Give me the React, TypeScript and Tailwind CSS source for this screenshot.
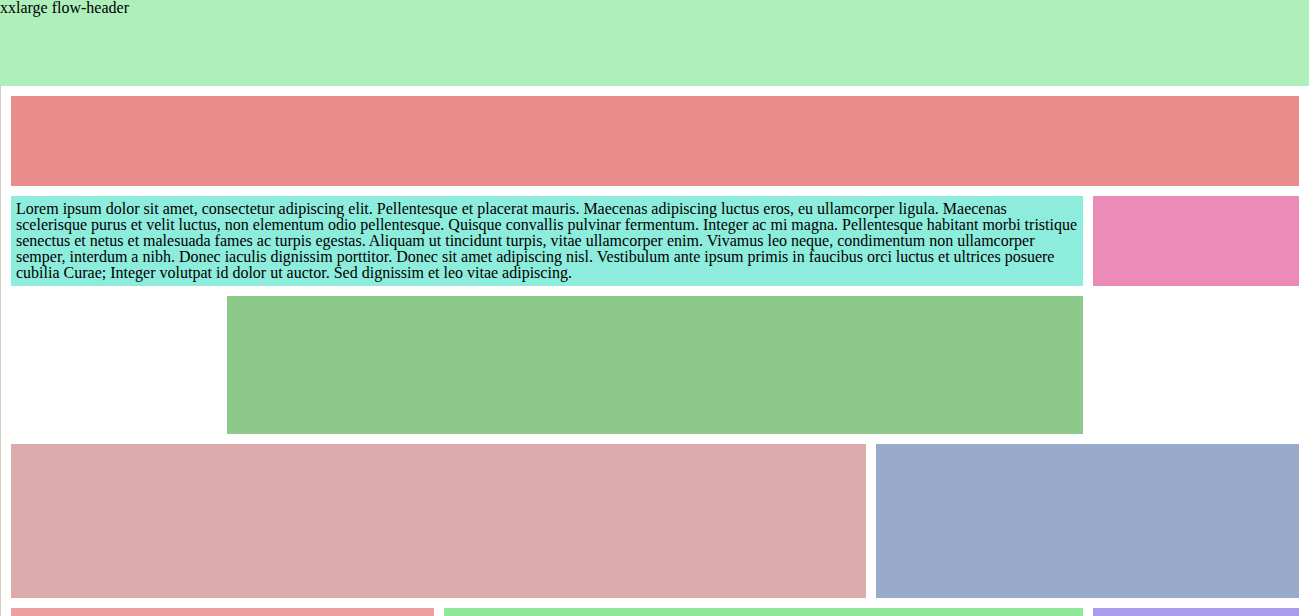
import React from "react";

export default function App() {
  return (
    <div className="w-[1309px] h-[616px] overflow-hidden bg-white font-['Liberation_Serif','Times_New_Roman',serif] text-[16px] text-black">
      <div className="h-[86px] bg-[#aeefbb] leading-[16px]">xxlarge flow-header</div>
      <div className="border-l border-[#d4d0c8] pl-[10px] pr-[10px] pt-[10px] grid grid-cols-6 gap-[10px]">
        <div className="col-span-6 h-[90px] bg-[#e88c8c]" />
        <div className="col-span-5 h-[90px] bg-[#8eecdc] px-[5px] pt-[5px] leading-[16px]">
          Lorem ipsum dolor sit amet, consectetur adipiscing elit. Pellentesque et placerat mauris. Maecenas adipiscing luctus eros, eu ullamcorper ligula. Maecenas scelerisque purus et velit luctus, non elementum odio pellentesque. Quisque convallis pulvinar fermentum. Integer ac mi magna. Pellentesque habitant morbi tristique senectus et netus et malesuada fames ac turpis egestas. Aliquam ut tincidunt turpis, vitae ullamcorper enim. Vivamus leo neque, condimentum non ullamcorper semper, interdum a nibh. Donec iaculis dignissim porttitor. Donec sit amet adipiscing nisl. Vestibulum ante ipsum primis in faucibus orci luctus et ultrices posuere cubilia Curae; Integer volutpat id dolor ut auctor. Sed dignissim et leo vitae adipiscing.
        </div>
        <div className="col-span-1 h-[90px] bg-[#ed8bb8]" />
        <div className="col-start-2 col-span-4 h-[138px] bg-[#8dc98a]" />
        <div className="col-start-1 col-span-4 h-[154px] bg-[#dbaaab]" />
        <div className="col-span-2 h-[154px] bg-[#99abca]" />
        <div className="col-span-2 h-[100px] bg-[#ef9f9f]" />
        <div className="col-span-3 h-[100px] bg-[#90e89a]" />
        <div className="col-span-1 h-[100px] bg-[#aa9deb]" />
      </div>
    </div>
  );
}
